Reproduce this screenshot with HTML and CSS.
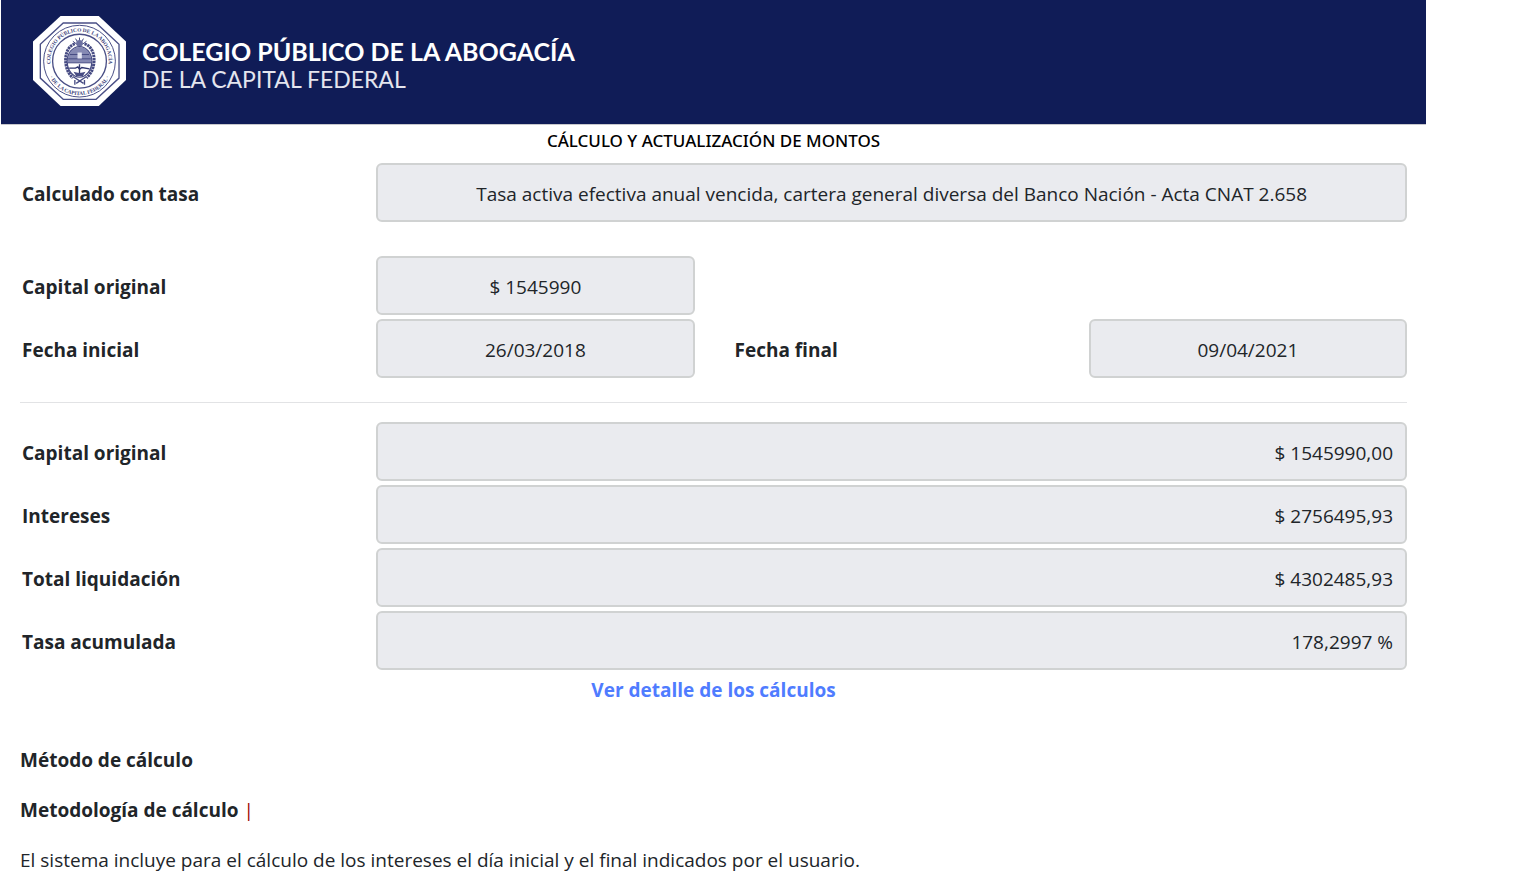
FILE: index.html
```html
<!DOCTYPE html>
<html lang="es">
<head>
<meta charset="utf-8">
<title>Cálculo y actualización de montos</title>
<link rel="stylesheet" href="styles.css">
</head>
<body>
<div class="page">
  <header class="banner">
    <svg class="seal" viewBox="38 33 280 271" role="img" aria-label="Sello del Colegio">
      <defs>
        <path id="arc-top" d="M96 200A88 88 0 1 1 260 200"/>
        <path id="arc-bottom" d="M79 190A101 101 0 0 0 277 190"/>
      </defs>
      <path fill="#fff" d="M121 33H236L318 110V226L236 304H121L38 226V110Z"/>
      <g fill="none" stroke="#4a4f86">
        <path stroke-width="4" d="M129 54H228L297 118V220L228 284H129L60 220V118Z"/>
        <circle cx="178" cy="169" r="108" stroke-width="3"/>
        <circle cx="178" cy="169" r="81" stroke-width="4"/>
      </g>
      <g class="seal-text">
        <text><textPath href="#arc-top" startOffset="50%">COLEGIO PÚBLICO DE LA ABOGACÍA</textPath></text>
        <text><textPath href="#arc-bottom" startOffset="50%">· DE LA CAPITAL FEDERAL ·</textPath></text>
      </g>
      <g fill="none" stroke="#464b83">
        <path stroke-width="9" stroke-dasharray="7 2" d="M164 117C129 127 127 193 158 219M193 117C230 127 231 193 199 219"/>
        <path stroke-width="4" d="M159 216L190 236M198 216L168 236M164 226V240M193 226V240"/>
        <path stroke-width="3" d="M178 98V116M166 101L174 114M190 101L182 114M158 109L170 118M199 109L187 118"/>
      </g>
      <circle cx="178" cy="115" r="10" fill="#6b70a0"/>
      <ellipse cx="178" cy="171" rx="37" ry="46" fill="#fff" stroke="#464b83" stroke-width="4"/>
      <path fill="#8589b3" d="M142 174C140 110 216 110 214 174Z"/>
      <path stroke="#464b83" stroke-width="3" d="M144 162H212M142 174H214M149 149H207"/>
      <path fill="#e5e6f2" d="M172 143H185V161H172Z"/>
      <path fill="none" stroke="#30366f" stroke-width="4" d="M147 190H166L173 186L178 194L185 188L208 192M178 178V206"/>
      <path fill="#464b83" d="M160 201Q178 208 196 201L188 214H168Z"/>
    </svg>
    <div class="brand">
      <span class="brand-name">COLEGIO PÚBLICO DE LA ABOGACÍA</span>
      <span class="brand-place">DE LA CAPITAL FEDERAL</span>
    </div>
  </header>
  <main class="content">
    <h1 class="title">CÁLCULO Y ACTUALIZACIÓN DE MONTOS</h1>
    <form>
      <div class="fields">
        <label for="tasa">Calculado con tasa</label>
        <input id="tasa" class="wide" readonly value="Tasa activa efectiva anual vencida, cartera general diversa del Banco Nación - Acta CNAT 2.658">
      </div>
      <div class="fields dates">
        <label for="capital">Capital original</label>
        <input id="capital" readonly value="$ 1545990">
        <label class="first" for="desde">Fecha inicial</label>
        <input id="desde" readonly value="26/03/2018">
        <label class="second" for="hasta">Fecha final</label>
        <input id="hasta" readonly value="09/04/2021">
      </div>
      <hr>
      <div class="fields results">
        <label for="original">Capital original</label>
        <input id="original" class="wide" readonly value="$ 1545990,00">
        <label for="intereses">Intereses</label>
        <input id="intereses" class="wide" readonly value="$ 2756495,93">
        <label for="total">Total liquidación</label>
        <input id="total" class="wide" readonly value="$ 4302485,93">
        <label for="acumulada">Tasa acumulada</label>
        <input id="acumulada" class="wide" readonly value="178,2997 %">
      </div>
    </form>
    <a class="detail" href="#metodo">Ver detalle de los cálculos</a>
    <section class="notes" id="metodo">
      <h2>Método de cálculo</h2>
      <h2>Metodología de cálculo <span class="bar">|</span></h2>
      <p>El sistema incluye para el cálculo de los intereses el día inicial y el final indicados por el usuario.</p>
    </section>
  </main>
</div>
</body>
</html>
```
FILE: styles.css
```css
* { box-sizing: border-box; }
body {
  margin: 0;
  background: #fff;
  color: #212529;
  font: 19px/30px "Open Sans", "Noto Sans", sans-serif;
}
.page { margin: 0 89px 0 1px; }
.banner {
  display: flex;
  align-items: center;
  gap: 16px;
  padding: 16px 32px 18px;
  background: #101c57;
  border-bottom: 1px solid #c8c8cc;
}
.seal { width: 93px; height: 90px; flex: none; }
.seal-text {
  font: bold 16px "Liberation Serif", serif;
  fill: #383d78;
  text-anchor: middle;
}
.brand {
  display: flex;
  flex-direction: column;
  padding-top: 8px;
  color: #fff;
  font-family: Lato, sans-serif;
}
.brand-name { font-size: 25px; line-height: 28px; font-weight: 700; }
.brand-place { font-size: 23px; line-height: 28px; color: #e4e5ee; }
.content { padding: 0 19px; }
.title {
  margin: 0;
  padding: 3px 0 9px;
  font-family: "Noto Sans", sans-serif;
  font-size: 17px;
  line-height: 26px;
  font-weight: 500;
  color: #000;
  text-align: center;
}
.fields {
  --label: calc((100% + 38px) / 4);
  display: grid;
  grid-template-columns: var(--label) 1fr 38px var(--label) 1fr;
  row-gap: 4px;
  align-items: center;
}
.fields label { grid-column: 1; padding: 3px 2px 0; font-weight: 700; }
.fields label.second { grid-column: 4; }
.fields input {
  width: 100%;
  min-width: 0;
  height: 59px;
  padding: 3px 12px 0;
  border: 2px solid #d0d2d2;
  border-radius: 6px;
  background: #eaebef;
  color: #212529;
  font: inherit;
  text-align: center;
}
.fields .wide { grid-column: 2 / -1; }
.dates { margin-top: 34px; }
.fields.results input { text-align: right; }
hr { margin: 24px 0 19px; border: 0; border-top: 1px solid #e2e3e5; }
.detail {
  display: block;
  width: fit-content;
  margin: 5px auto 0;
  color: #4f7cff;
  font-weight: 700;
  text-decoration: none;
}
.notes { margin-top: 40px; }
.notes h2, .notes p { margin: 0 0 20px; font-size: 19px; line-height: 30px; }
.notes h2 { font-weight: 700; }
.notes p { margin: 0; }
.notes .bar { font-weight: 400; color: #a00000; }
```
